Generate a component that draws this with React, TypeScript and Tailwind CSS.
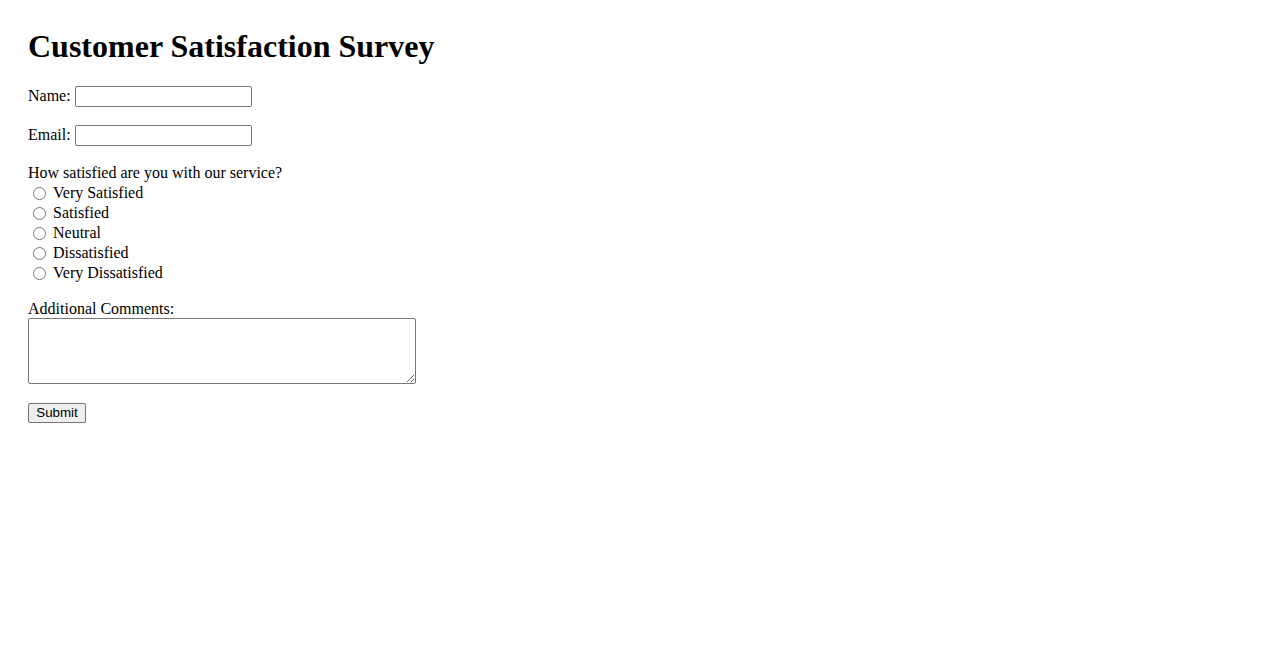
import React from 'react';

const options = ['Very Satisfied', 'Satisfied', 'Neutral', 'Dissatisfied', 'Very Dissatisfied'];

const App = () => {
  return (
    <div className="min-h-screen bg-white p-7 font-['Liberation_Serif',serif] text-base leading-[1.15] text-black">
      <h1 className="mb-[20px] text-[32px] font-bold leading-[37px]">Customer Satisfaction Survey</h1>
      <form onSubmit={(e) => e.preventDefault()}>
        <div className="mb-[17px] flex h-[22px] items-center">
          <label htmlFor="name" className="mr-1">Name:</label>
          <input id="name" type="text" className="h-[21px] w-[177px] rounded-[2px] border border-[#767676] px-0.5 text-[13px]" />
        </div>
        <div className="mb-[18px] flex h-[22px] items-center">
          <label htmlFor="email" className="mr-1">Email:</label>
          <input id="email" type="email" className="h-[21px] w-[177px] rounded-[2px] border border-[#767676] px-0.5 text-[13px]" />
        </div>

        <div className="mb-[17px]">
          <div className="h-[19px]">How satisfied are you with our service?</div>
          {options.map((opt) => (
            <label key={opt} className="flex h-5 items-center">
              <input type="radio" name="satisfaction" value={opt} className="ml-[5px] mr-[7px] h-[13px] w-[13px]" />
              <span>{opt}</span>
            </label>
          ))}
        </div>

        <div className="mb-[19px]">
          <label htmlFor="comments" className="block h-[18px]">Additional Comments:</label>
          <textarea id="comments" className="block h-[66px] w-[388px] rounded-[2px] border border-[#767676] p-0.5 text-[13px]" />
        </div>

        <button type="submit" className="h-5 w-[58px] rounded-[2px] border border-[#767676] bg-[#efefef] font-['Liberation_Sans',sans-serif] text-[13.33px] leading-[16px]">
          Submit
        </button>
      </form>
    </div>
  );
};

export default App;
